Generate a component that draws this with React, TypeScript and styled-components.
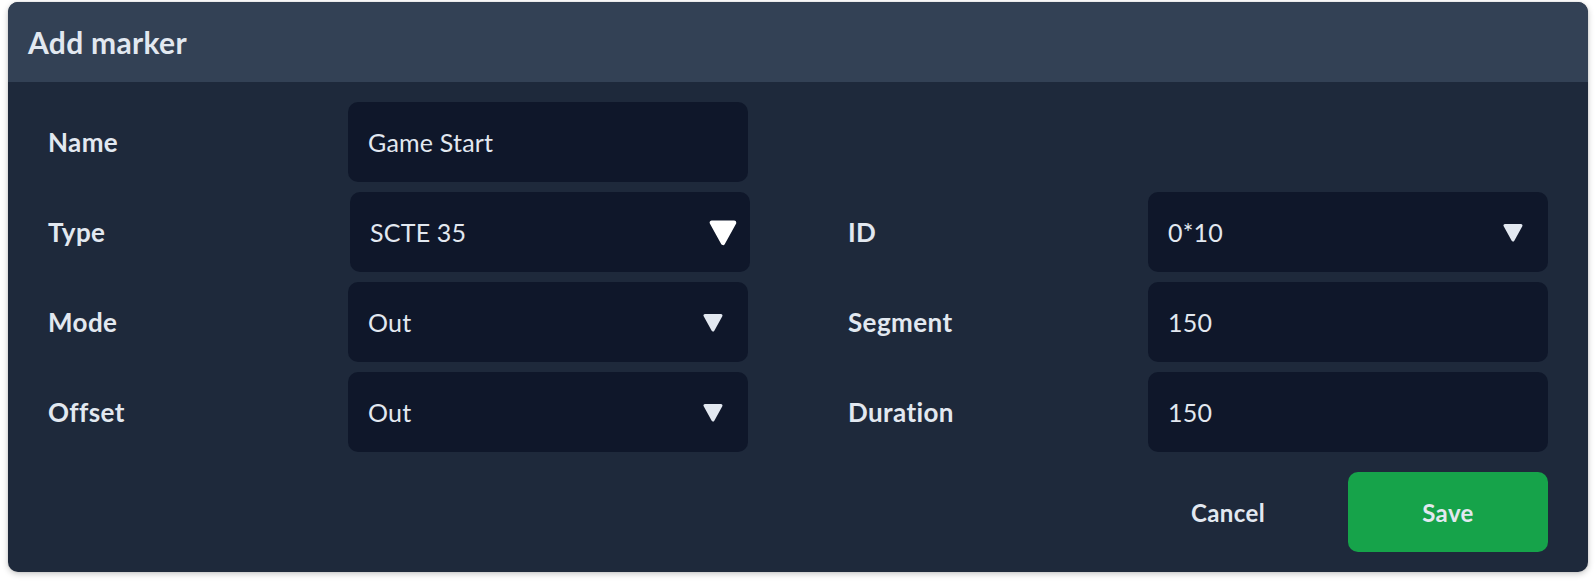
import React, {FunctionComponent} from "react";
import styled, {createGlobalStyle} from "styled-components";

const GlobalStyle = createGlobalStyle`
  html, body {
    margin: 0;
    padding: 0;
    background: #ffffff;
  }
  body {
    font-family: Lato, "Noto Sans", sans-serif;
  }
`;

const Page = styled.div`
  padding: 2px 8px 16px 8px;
`;

const Card = styled.div`
  width: 1580px;
  border-radius: 10px;
  overflow: hidden;
  background-color: #1e293b;
  box-shadow: 0 2px 6px rgba(0, 0, 0, .22), 0 0 2px rgba(0, 0, 0, .12);
`;

const Header = styled.div`
  height: 80px;
  display: flex;
  align-items: center;
  padding-left: 20px;
  background-color: #334155;
  color: #e2e8f0;
  font-size: 30px;
  font-weight: 700;
  letter-spacing: .3px;
`;

const Body = styled.div`
  padding: 20px 40px;
  display: flex;
  flex-direction: column;
  gap: 10px;
`;

const Row = styled.div`
  display: flex;
  gap: 100px;
`;

const Field = styled.div`
  display: flex;
  align-items: center;
`;

const Label = styled.label`
  width: 300px;
  color: #e2e8f0;
  font-size: 26px;
  font-weight: 700;
  letter-spacing: .4px;
`;

const InputBox = styled.div<{$nudge?: number}>`
  width: 400px;
  height: 80px;
  box-sizing: border-box;
  transform: translateX(${p => p.$nudge || 0}px);
  display: flex;
  align-items: center;
  justify-content: space-between;
  padding: 0 25px 0 20px;
  border-radius: 10px;
  background-color: #0f172a;
  color: #e2e8f0;
  font-size: 25px;
  letter-spacing: .2px;
`;

const Actions = styled.div`
  display: flex;
  justify-content: flex-end;
  gap: 20px;
  margin-top: 10px;
`;

const Button = styled.button<{$primary?: boolean}>`
  width: 200px;
  height: 80px;
  border: none;
  border-radius: 10px;
  font-family: Lato, "Noto Sans", sans-serif;
  font-size: 24px;
  font-weight: 700;
  letter-spacing: .4px;
  color: #e2e8f0;
  background-color: ${p => (p.$primary ? "#16a34a" : "transparent")};
  cursor: pointer;
`;

const Caret: FunctionComponent<{big?: boolean}> = ({big}) => (
  <svg
    width={big ? 28 : 20}
    height={big ? 27 : 19}
    viewBox="0 0 20 19"
    style={{marginRight: big ? -12 : 0}}
  >
    <path
      d="M2 2.5 H18 L10 17 Z"
      fill={big ? "#ffffff" : "#e2e8f0"}
      stroke={big ? "#ffffff" : "#e2e8f0"}
      strokeWidth={3}
      strokeLinejoin="round"
    />
  </svg>
);

interface FieldProps {
  label: string;
  value: string;
  select?: boolean;
  big?: boolean;
  nudge?: number;
}

const FormField: FunctionComponent<FieldProps> = ({label, value, select, big, nudge}) => (
  <Field>
    <Label>{label}</Label>
    <InputBox $nudge={nudge}>
      <span>{value}</span>
      {select && <Caret big={big} />}
    </InputBox>
  </Field>
);

const App: FunctionComponent = () => {
  return (
    <Page>
      <GlobalStyle />
      <Card>
        <Header>Add marker</Header>
        <Body>
          <Row>
            <FormField label="Name" value="Game Start" />
          </Row>
          <Row>
            <FormField label="Type" value="SCTE 35" select big nudge={2} />
            <FormField label="ID" value="0*10" select />
          </Row>
          <Row>
            <FormField label="Mode" value="Out" select />
            <FormField label="Segment" value="150" />
          </Row>
          <Row>
            <FormField label="Offset" value="Out" select />
            <FormField label="Duration" value="150" />
          </Row>
          <Actions>
            <Button>Cancel</Button>
            <Button $primary>Save</Button>
          </Actions>
        </Body>
      </Card>
    </Page>
  );
};

export default App;
